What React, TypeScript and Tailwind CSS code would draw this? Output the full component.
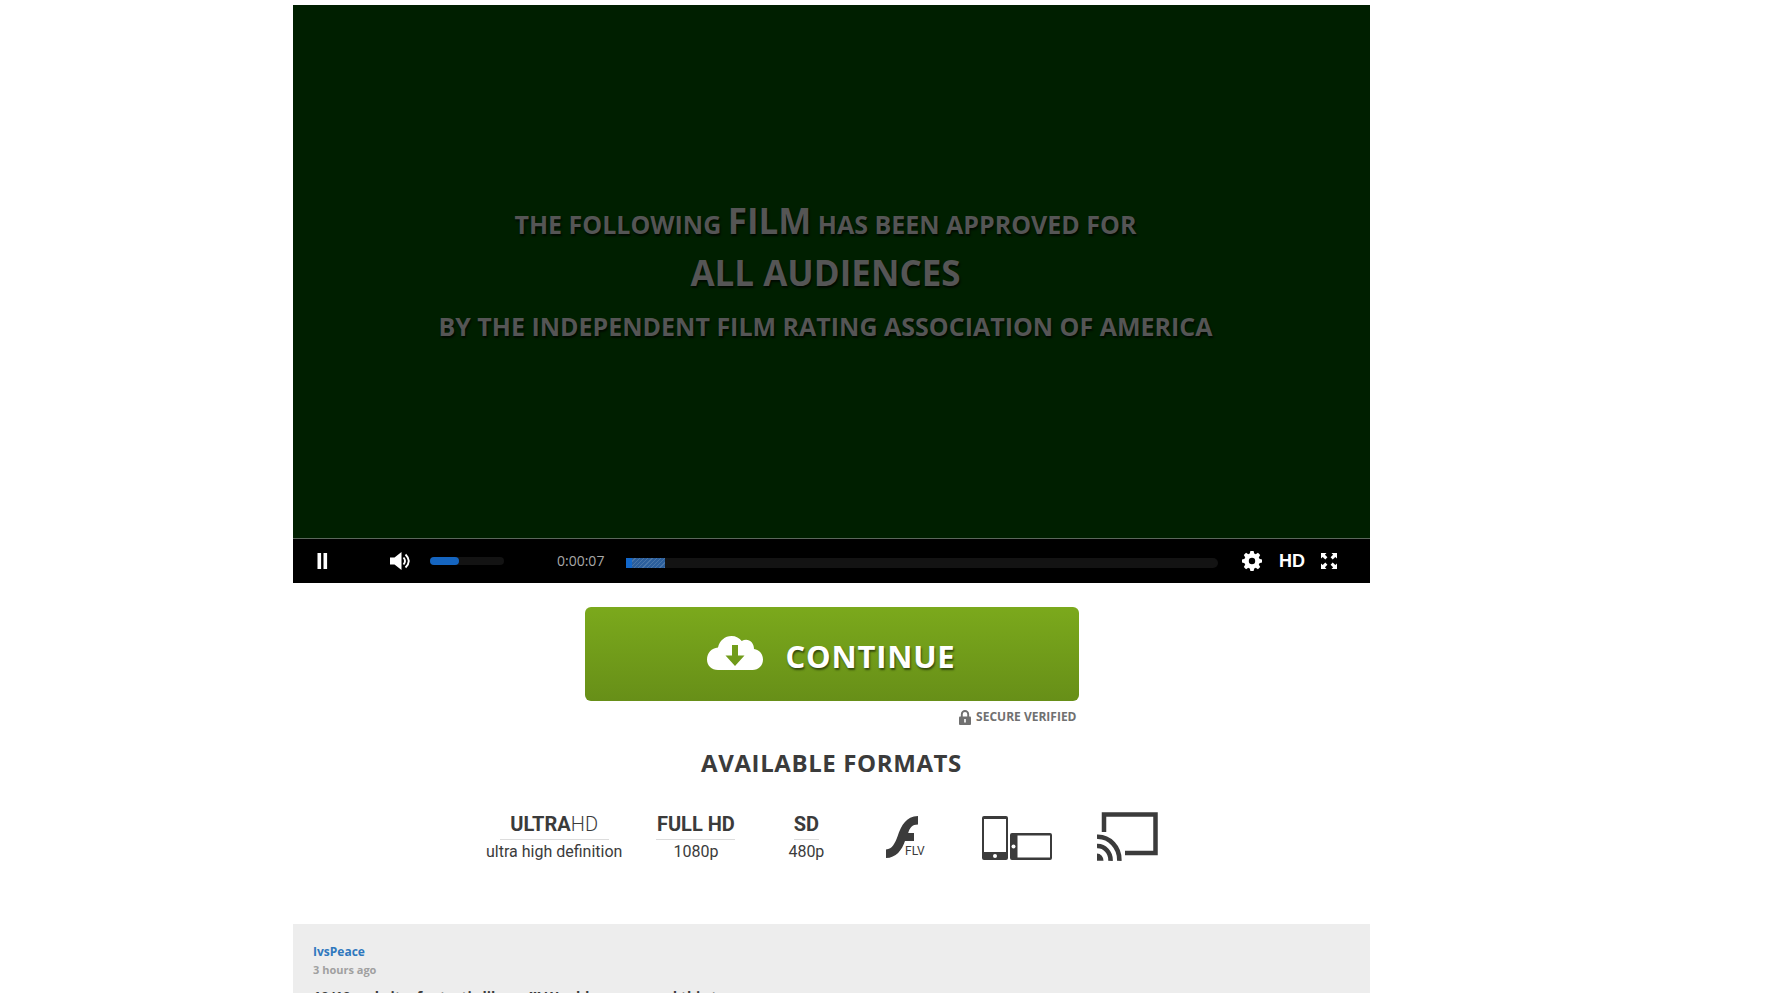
import React from "react";

function PlayerButton({ label, className = "", children }: { label: string; className?: string; children: React.ReactNode }) {
  return (
    <button type="button" aria-label={label} className={`flex shrink-0 items-center justify-center text-white ${className}`}>
      {children}
    </button>
  );
}

function Player() {
  return (
    <section className="bg-black text-white">
      <div className="flex h-[534px] flex-col items-center border-b border-[#5c665c] bg-[#001f00] pt-48 pr-3 text-center font-bold whitespace-nowrap text-[#555] [text-shadow:1px_2px_2px_#000a00]">
        <p className="text-[25px] leading-[48px]">
          THE FOLLOWING <span className="text-[35px]">FILM</span> HAS BEEN APPROVED FOR
        </p>
        <p className="text-[35px] leading-[50px]">ALL AUDIENCES</p>
        <p className="text-[25px] leading-[56px]">BY THE INDEPENDENT FILM RATING ASSOCIATION OF AMERICA</p>
      </div>
      <div className="flex h-11 items-center pr-[33px] pl-6">
        <PlayerButton label="Pause">
          <svg width="12" height="16" viewBox="0 0 12 16" fill="currentColor">
            <path d="M.5 0h3.600v16H.5zM6.500 0h3.600v16H6.500z" />
          </svg>
        </PlayerButton>
        <PlayerButton label="Mute" className="ml-[60px]">
          <svg width="22" height="18" viewBox="0 0 22 18" fill="currentColor">
            <path d="M1 5.500h4.500L12.500 0v18l-7-5.500H1z" />
            <path d="M14.500 5.500q3 3.500 0 7M16.500 2.500q6.500 6.500 0 13" fill="none" stroke="currentColor" strokeWidth="1.900" />
          </svg>
        </PlayerButton>
        <div className="ml-[19px] h-2 w-[74px] rounded-full bg-[#131313]">
          <div className="h-2 w-[29px] rounded-sm bg-[#1565c0]" />
        </div>
        <span className="ml-[53px] text-sm text-[#a8a8a8]">0:00:07</span>
        <div className="mt-1 ml-[22px] flex h-[10px] flex-1 overflow-hidden rounded-r-full bg-[#131313]">
          <div className="w-[6px] bg-[#1268cc]" />
          <div className="w-[33px] bg-[repeating-linear-gradient(135deg,#2c5f9c_0px,#2c5f9c_2px,#4a76a8_2px,#4a76a8_3px)]" />
        </div>
        <PlayerButton label="Settings" className="ml-6">
          <svg width="20" height="20" viewBox="-10 -10 20 20" fill="currentColor">
            <circle r="5.500" fill="none" stroke="currentColor" strokeWidth="4.600" />
            {[0, 45, 90, 135].map((a) => (
              <path key={a} transform={`rotate(${a})`} d="M-2.300-7L-1.600-10h3.200L2.300-7zM-2.300 7L-1.600 10h3.200L2.300 7z" />
            ))}
          </svg>
        </PlayerButton>
        <PlayerButton label="High definition" className="ml-[17px] font-['Liberation_Sans',sans-serif] text-lg font-bold">
          HD
        </PlayerButton>
        <PlayerButton label="Full screen" className="ml-4">
          <svg width="16" height="16" viewBox="0 0 16 16" fill="currentColor">
            {[0, 90, 180, 270].map((a) => (
              <path key={a} transform={`rotate(${a} 8 8)`} d="M0 0h5.500L3.900 1.700 6.400 4.300 4.300 6.400 1.700 3.900 0 5.500z" />
            ))}
          </svg>
        </PlayerButton>
      </div>
    </section>
  );
}

function TextFormat({ title, detail, width }: { title: React.ReactNode; detail: string; width: string }) {
  return (
    <li className="flex flex-col items-center pt-0.5 whitespace-nowrap">
      <span className={`flex justify-center border-b border-[#dcdcdc] text-xl leading-[30px] font-bold ${width}`}>{title}</span>
      <span className="text-base leading-6">{detail}</span>
    </li>
  );
}

function Formats() {
  return (
    <ul className="flex h-[53px] items-start pl-[193px] font-[Roboto,sans-serif] text-[#3b3b3b]">
      <TextFormat width="w-[109px]" title={<>ULTRA<span className="font-light">HD</span></>} detail="ultra high definition" />
      <li className="w-[34px]" aria-hidden="true" />
      <TextFormat width="w-[79px]" title="FULL HD" detail="1080p" />
      <li className="w-[53px]" aria-hidden="true" />
      <TextFormat width="w-[25px]" title="SD" detail="480p" />
      <li className="ml-[61px]">
        <svg width="44" height="54" viewBox="0 0 44 54" fill="currentColor">
          <path d="M33 9v8.500c-6 0-8 3-9.800 8.500H29v8h-9C17 43 11 51 1 51v-8.500c6.500-.5 9-6.500 11.500-13C16.500 18 21 9.500 33 9z" />
          <text x="20" y="48" fontSize="12" stroke="#fff" strokeWidth="3" paintOrder="stroke">FLV</text>
        </svg>
      </li>
      <li className="ml-[53px]">
        <svg width="71" height="54" viewBox="0 0 71 54" fill="currentColor">
          <path fillRule="evenodd" d="M2 9h22q2 0 2 2v40q0 2-2 2H2q-2 0-2-2V11q0-2 2-2zM2 12v33h22V12z" />
          <circle cx="13" cy="49" r="2" fill="#fff" />
          <path fillRule="evenodd" d="M30 26h38q2 0 2 2v23q0 2-2 2H30q-2 0-2-2V28q0-2 2-2zM35.500 28.500v22H68v-22z" />
          <circle cx="31.500" cy="39.500" r="2" fill="#fff" />
        </svg>
      </li>
      <li className="ml-11">
        <svg width="61" height="54" viewBox="0 0 61 54" fill="none" stroke="currentColor">
          <path d="M7 25V7.500h51.500v38.500H28" strokeWidth="4.500" />
          <path d="M0 29.800a21.500 23 0 0 1 22.300 24M0 39a13 14 0 0 1 13.500 14.800" strokeWidth="4.600" />
          <path d="M0 46.500a6.500 7 0 0 1 6.500 7.300H0z" fill="currentColor" stroke="none" />
        </svg>
      </li>
    </ul>
  );
}

export default function App() {
  return (
    <div className="h-screen overflow-hidden bg-white font-['Open_Sans',sans-serif]">
      <div className="mx-auto max-w-[1199px] pt-[5px]">
        <main className="max-w-[1077px]">
          <Player />

          <div className="mx-auto mt-6 flex w-[494px] max-w-full flex-col">
            <button
              type="button"
              className="flex h-[94px] items-center justify-center gap-[22px] rounded-md bg-linear-to-b from-[#7ba91c] to-[#678f18] pt-1 text-[31px] font-bold tracking-wide text-white [text-shadow:1px_2px_2px_#33480c]"
            >
              <svg width="56" height="34" viewBox="0 0 56 34" fill="#fff" className="mb-1.5">
                <path fillRule="evenodd" d="M11 34C4.500 34 0 29.500 0 23.500 0 17 4.500 12 11 11.500 12.500 4.500 18 0 24.500 0c4.500 0 8 2 10.200 5 6.300-3.500 12.300 1 12.300 8C52.500 14 56 18 56 23.500 56 29.500 51.500 34 45.500 34zM25 9v10.500h-6.500L28 30l9.500-10.500H31V9z" />
              </svg>
              CONTINUE
            </button>
            <p className="mt-1 mr-0.5 flex items-center gap-[5px] self-end text-xs leading-6 font-bold text-[#707070]">
              <svg width="12" height="15" viewBox="0 0 12 15" fill="currentColor">
                <path d="M2.800 7V4.200a3.200 3.200 0 0 1 6.400 0V7" fill="none" stroke="currentColor" strokeWidth="1.900" />
                <rect y="6.500" width="12" height="8.500" rx="1" />
                <path d="M5.200 9h1.600v3.500H5.200z" fill="#fff" />
              </svg>
              SECURE VERIFIED
            </p>
          </div>

          <h2 className="mt-4 text-center text-2xl leading-9 font-bold tracking-wide text-[#3b3b3b]">AVAILABLE FORMATS</h2>
          <div className="mt-[26px]">
            <Formats />
          </div>

          <article className="mt-16 bg-[#ededed] px-5 pt-[19px] pb-6 font-bold">
            <a href="#profile" className="block text-xs leading-[18px] text-[#2f78be]">IvsPeace</a>
            <p className="text-[11px] leading-[18px] text-[#a0a0a0]">3 hours ago</p>
            <p className="mt-1.5 text-sm leading-6 text-[#3b3b3b]">10/10 website, fantastic library!!! Would recommend this to anyone</p>
          </article>
        </main>
      </div>
    </div>
  );
}
